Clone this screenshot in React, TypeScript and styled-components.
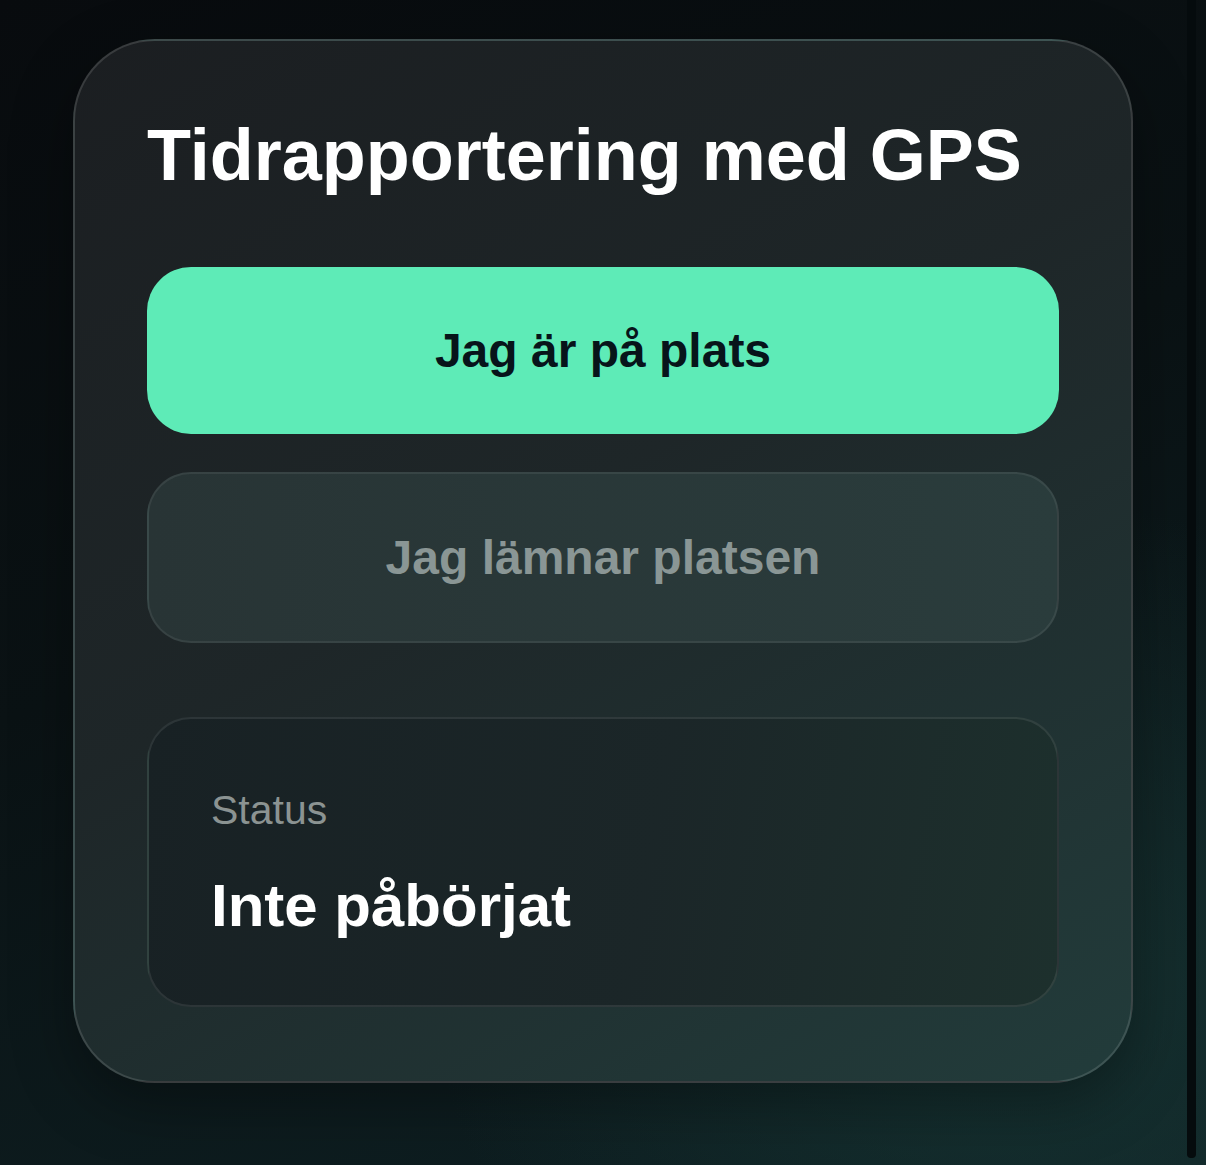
import React from "react";
import styled, { createGlobalStyle } from "styled-components";

const GlobalStyle = createGlobalStyle`
  html, body {
    margin: 0;
    padding: 0;
    background: #0a1013;
  }
  body {
    font-family: "Liberation Sans", Arial, sans-serif;
  }
  * { box-sizing: border-box; }
`;

const Page = styled.main`
  position: relative;
  width: 1206px;
  height: 1165px;
  overflow: hidden;
  padding-top: 39px;
  display: flex;
  justify-content: center;
  align-items: flex-start;
  background:
    radial-gradient(ellipse 70% 60% at 85% 85%, rgba(28, 64, 60, 0.55), rgba(28, 64, 60, 0) 70%),
    linear-gradient(160deg, #080b0e 0%, #0a1214 45%, #0f2225 100%);
`;

const Rail = styled.div`
  position: absolute;
  top: 0;
  right: 10px;
  width: 9px;
  height: 1158px;
  background: #050b0d;
  border-radius: 0 0 4px 4px;
`;

const Card = styled.section`
  width: 1060px;
  height: 1044px;
  border: 2px solid rgba(255, 255, 255, 0.13);
  border-radius: 82px;
  padding: 73px 72px 74px;
  display: flex;
  flex-direction: column;
  background: linear-gradient(150deg, #1b1e21 0%, #1e2628 45%, #223c3b 100%);
  box-shadow: 0 20px 60px rgba(0, 0, 0, 0.35);
`;

const Title = styled.h1`
  margin: 0 0 70px;
  font-size: 72px;
  line-height: 83px;
  font-weight: 700;
  color: #ffffff;
  letter-spacing: 0;
`;

const ActionButton = styled.button<{ $primary?: boolean }>`
  width: 100%;
  height: ${(p) => (p.$primary ? "167px" : "172px")};
  margin-bottom: ${(p) => (p.$primary ? "38px" : "74px")};
  border-radius: 44px;
  font-family: "Liberation Sans", Arial, sans-serif;
  font-size: 48px;
  font-weight: 700;
  display: flex;
  align-items: center;
  justify-content: center;
  cursor: pointer;
  padding: 0;
  border: ${(p) => (p.$primary ? "none" : "2px solid rgba(255, 255, 255, 0.07)")};
  background: ${(p) =>
    p.$primary
      ? "#5eebb7"
      : "linear-gradient(90deg, rgba(40, 52, 53, 1) 0%, rgba(42, 60, 60, 1) 100%)"};
  color: ${(p) => (p.$primary ? "#07141a" : "#8a9695")};
`;

const StatusBox = styled.div`
  width: 100%;
  height: 290px;
  border: 2px solid rgba(255, 255, 255, 0.09);
  border-radius: 44px;
  padding: 68px 62px 0;
  display: flex;
  flex-direction: column;
  gap: 37px;
  background: linear-gradient(100deg, #182124 0%, #1b2628 55%, #1d302d 100%);
`;

const StatusLabel = styled.span`
  font-size: 41px;
  line-height: 47px;
  color: #8b9392;
`;

const StatusValue = styled.span`
  font-size: 60px;
  line-height: 69px;
  font-weight: 700;
  color: #ffffff;
`;

export default function App() {
  return (
    <>
      <GlobalStyle />
      <Page>
        <Card>
          <Title>Tidrapportering med GPS</Title>
          <ActionButton $primary>Jag är på plats</ActionButton>
          <ActionButton>Jag lämnar platsen</ActionButton>
          <StatusBox>
            <StatusLabel>Status</StatusLabel>
            <StatusValue>Inte påbörjat</StatusValue>
          </StatusBox>
        </Card>
        <Rail />
      </Page>
    </>
  );
}
